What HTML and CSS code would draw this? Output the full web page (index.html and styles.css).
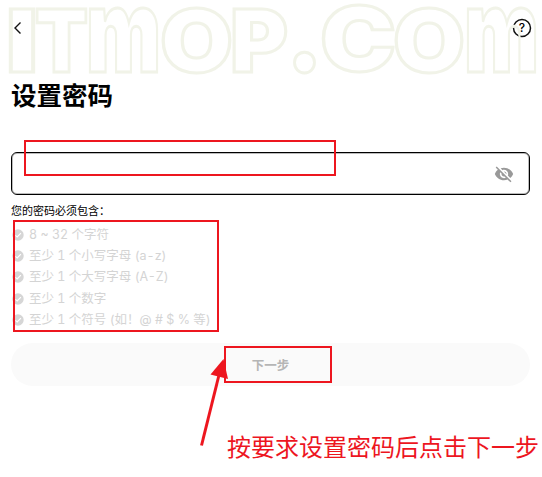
FILE: index.html
```html
<!DOCTYPE html>
<html lang="zh-CN">
<head>
    <meta charset="UTF-8">
    <meta name="viewport" content="width=device-width, initial-scale=1.0">
    <title>设置密码</title>
    <link rel="stylesheet" href="styles.css">
</head>
<body>
    <svg width="0" height="0" class="defs">
        <symbol id="check" viewBox="0 0 12 12">
            <circle cx="6" cy="6" r="5.7" fill="#d6d6d6"/>
            <path d="M3.4 6.4 5.2 8 8.9 4.1" fill="none" stroke="#fff" stroke-width="1.2"/>
        </symbol>
    </svg>

    <header class="header">
        <svg class="back" width="10" height="14" viewBox="0 0 10 14">
            <path d="M7.500 1.500 2 7l5.500 5.500"/>
        </svg>
        <div class="help">
            <svg width="20" height="20" viewBox="0 0 20 20"><circle cx="10" cy="10" r="8.500"/></svg>
            <span>?</span>
        </div>
    </header>

    <main>
        <h1>设置密码</h1>

        <div class="password">
            <input type="password" aria-label="密码">
            <svg width="20" height="20" viewBox="0 0 24 24">
                <path fill="#999" d="M12 7c2.760 0 5 2.240 5 5 0 .65-.13 1.260-.36 1.830l2.920 2.920c1.510-1.260 2.700-2.890 3.430-4.750-1.730-4.390-6-7.500-11-7.500-1.400 0-2.740.25-3.980.7l2.160 2.160C10.740 7.130 11.350 7 12 7zM2 4.270l2.280 2.280.46.46C3.080 8.300 1.780 10.020 1 12c1.730 4.390 6 7.500 11 7.500 1.550 0 3.030-.3 4.380-.84l.42.42L19.730 22 21 20.730 3.270 3 2 4.270zM7.530 9.800l1.550 1.550c-.05.21-.08.43-.08.65 0 1.660 1.340 3 3 3 .22 0 .44-.03.65-.08l1.550 1.550c-.67.33-1.410.53-2.200.53-2.760 0-5-2.240-5-5 0-.79.2-1.530.53-2.200zm4.310-.78 3.150 3.150.02-.16c0-1.660-1.340-3-3-3l-.17.01z"/>
            </svg>
        </div>

        <p class="hint">您的密码必须包含：</p>
        <ul class="rules">
            <li><svg><use href="#check"/></svg><span>8 ~ 32 个字符</span></li>
            <li><svg><use href="#check"/></svg><span>至少 1 个小写字母 (a-z)</span></li>
            <li><svg><use href="#check"/></svg><span>至少 1 个大写字母 (A-Z)</span></li>
            <li><svg><use href="#check"/></svg><span>至少 1 个数字</span></li>
            <li><svg><use href="#check"/></svg><span>至少 1 个符号 (如！@ # $ % 等)</span></li>
        </ul>

        <button class="next">下一步</button>
    </main>

    <!-- watermark and notes over the page -->
    <svg class="watermark" width="542" height="80" viewBox="0 0 542 80">
        <text x="5.500" y="71.500" font-size="86" textLength="33" lengthAdjust="spacingAndGlyphs">I</text>
        <text x="35" y="71.500" font-size="86" textLength="53" lengthAdjust="spacingAndGlyphs">T</text>
        <text x="86" y="71.500" font-size="115" textLength="75" lengthAdjust="spacingAndGlyphs">m</text>
        <text x="160" y="71.500" font-size="87" textLength="73" lengthAdjust="spacingAndGlyphs">O</text>
        <text x="230" y="71.500" font-size="86" textLength="58" lengthAdjust="spacingAndGlyphs">P</text>
        <text x="286" y="71.500" font-size="105" textLength="37" lengthAdjust="spacingAndGlyphs">.</text>
        <text x="320" y="71" font-size="90" textLength="76" lengthAdjust="spacingAndGlyphs">C</text>
        <text x="393" y="71.500" font-size="87" textLength="72" lengthAdjust="spacingAndGlyphs">O</text>
        <text x="464" y="71.500" font-size="115" textLength="75" lengthAdjust="spacingAndGlyphs">m</text>
    </svg>
    <div class="box box-input"></div>
    <div class="box box-rules"></div>
    <div class="box box-next"></div>
    <svg class="arrow" width="36" height="92" viewBox="0 0 36 92">
        <path d="M6.500 90.500 24 20" fill="none" stroke="#ed161f" stroke-width="3"/>
        <path d="M28.500 4 15.500 19.500 33 24z" fill="#ed161f"/>
    </svg>
    <div class="note">按要求设置密码后点击下一步</div>
</body>
</html>
```
FILE: styles.css
```css
* {
    box-sizing: border-box;
}

body {
    position: relative;
    width: 542px;
    height: 477px;
    margin: 0;
    overflow: hidden;
    background: #fff;
    color: #000;
    font-family: Inter, "Noto Sans CJK SC", sans-serif;
}

.defs {
    position: absolute;
}

.header {
    display: flex;
    justify-content: space-between;
    align-items: center;
    height: 55px;
    padding: 0 10px 0 13px;
}

.back {
    fill: none;
    stroke: #111;
    stroke-width: 1.4;
}

.help {
    display: grid;
    place-items: center;
    width: 20px;
    height: 20px;
    font-size: 12px;
    font-weight: 500;
    line-height: 18px;
}

.help svg,
.help span {
    grid-area: 1 / 1;
}

.help circle {
    fill: none;
    stroke: #111;
    stroke-width: 1.5;
}

main {
    padding: 0 12px 0 11px;
}

h1 {
    height: 38px;
    margin: 22px 0 37px;
    font-size: 25.5px;
    font-weight: 700;
    line-height: 38px;
}

.password {
    display: flex;
    align-items: center;
    height: 43px;
    padding: 0 15px;
    border: 1px solid #000;
    border-radius: 6px;
    box-shadow: inset 0 0 0 1px #bbb;
}

.password input {
    flex: 1;
    border: 0;
    outline: 0;
    background: none;
}

.hint {
    height: 16px;
    margin: 8px 0 5px;
    font-size: 11px;
    line-height: 16px;
}

.rules {
    margin: 0;
    padding: 0;
    list-style: none;
    color: #d4d4d4;
    font-size: 12.5px;
    font-variant-numeric: tabular-nums;
}

.rules li {
    display: flex;
    align-items: center;
    gap: 5px;
    height: 21.4px;
    padding-left: 1px;
    line-height: 20px;
    white-space: nowrap;
}

.rules svg {
    width: 12px;
    height: 12px;
}

.next {
    display: block;
    width: 100%;
    height: 43px;
    margin-top: 12px;
    padding: 0;
    border: 0;
    border-radius: 22px;
    background: #fafafa;
    color: #b5b5b5;
    font: 700 12.5px "Noto Sans CJK SC", sans-serif;
}

.watermark {
    position: absolute;
    top: 0;
    left: 0;
    fill: none;
    stroke: #f1f3e8;
    stroke-width: 3;
    font-family: Inter, sans-serif;
    font-weight: 900;
    pointer-events: none;
}

.box {
    position: absolute;
    border: 2px solid #ed161f;
    pointer-events: none;
}

.box-input {
    left: 24px;
    top: 140px;
    width: 312px;
    height: 36px;
}

.box-rules {
    left: 13px;
    top: 220px;
    width: 206px;
    height: 112px;
}

.box-next {
    left: 224px;
    top: 346px;
    width: 108px;
    height: 37px;
}

.arrow {
    position: absolute;
    left: 195px;
    top: 355px;
}

.note {
    position: absolute;
    left: 227px;
    top: 428px;
    color: #ed161f;
    font-family: "Noto Sans CJK SC", sans-serif;
    font-size: 24px;
    line-height: 36px;
    white-space: nowrap;
}
```
